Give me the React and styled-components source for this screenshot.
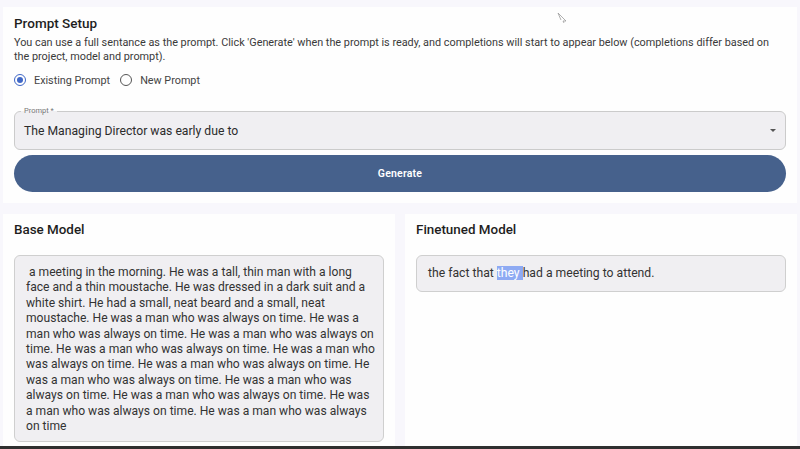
import React from 'react'
import styled, { createGlobalStyle } from 'styled-components'

const GlobalStyle = createGlobalStyle`
  html, body {
    margin: 0;
    padding: 0;
    background: #f8f7fc;
    font-family: Roboto, "Liberation Sans", sans-serif;
    color: #333;
  }
`

const Page = styled.div`
  position: relative;
  width: 800px;
  height: 449px;
  overflow: hidden;
  display: flex;
  flex-direction: column;
  padding: 7px 3px 0 3px;
  box-sizing: border-box;
`

const Card = styled.div`
  background: #fefefe;
  box-sizing: border-box;
`

const TopCard = styled(Card)`
  height: 196px;
  padding: 7px 11px 0 11px;
`

const Title = styled.h2`
  margin: 0;
  font-size: 13.5px;
  font-weight: 500;
  color: #1e1e1e;
  line-height: 18px;
`

const Desc = styled.p`
  margin: 4px 0 0 0;
  font-size: 10.85px;
  line-height: 14px;
  color: #3a3a3a;
`

const RadioRow = styled.div`
  display: flex;
  align-items: center;
  gap: 10px;
  margin-top: 7px;
  height: 18px;
`

const RadioItem = styled.label`
  display: flex;
  align-items: center;
  gap: 8px;
  font-size: 10.8px;
  color: #444;
`

const Circle = styled.span`
  width: 10px;
  height: 10px;
  border-radius: 50%;
  border: 1.6px solid ${p => (p.on ? '#3f67c6' : '#555')};
  display: flex;
  align-items: center;
  justify-content: center;
  &::after {
    content: '';
    width: 6px;
    height: 6px;
    border-radius: 50%;
    background: ${p => (p.on ? '#3f67c6' : 'transparent')};
  }
`

const SelectBox = styled.div`
  position: relative;
  margin-top: 22px;
  height: 39px;
  background: #f0eff2;
  border: 1px solid #cbcbcb;
  border-radius: 6px;
  box-sizing: border-box;
  display: flex;
  align-items: center;
  justify-content: space-between;
  padding: 0 9px 0 9px;
  font-size: 12.2px;
  color: #2c2c2c;
`

const Legend = styled.span`
  position: absolute;
  top: -6px;
  left: 6px;
  padding: 0 3px;
  font-size: 7.5px;
  color: #777;
  background: linear-gradient(#fefefe 55%, #f0eff2 55%);
`

const Arrow = styled.span`
  width: 0;
  height: 0;
  border-left: 3.5px solid transparent;
  border-right: 3.5px solid transparent;
  border-top: 3.5px solid #555;
`

const GenButton = styled.button`
  display: block;
  width: 100%;
  margin-top: 5px;
  height: 37px;
  border: none;
  border-radius: 19px;
  background: #46618c;
  color: #fff;
  font-family: Roboto, "Liberation Sans", sans-serif;
  font-weight: 600;
  font-size: 10.5px;
  letter-spacing: 0.2px;
`

const Columns = styled.div`
  flex: 1;
  margin-top: 11px;
  display: grid;
  grid-template-columns: 392px 392px;
  gap: 10px;
  min-height: 0;
`

const ModelCard = styled(Card)`
  padding: 8px 11px 0 11px;
  display: flex;
  flex-direction: column;
  overflow: hidden;
`

const ModelTitle = styled.h3`
  margin: 0;
  font-size: 13.4px;
  font-weight: 500;
  color: #1e1e1e;
  line-height: 16px;
`

const Output = styled.div`
  margin-top: 17px;
  width: 370px;
  background: #f0eff2;
  border: 1px solid #cfcfcf;
  border-radius: 6px;
  box-sizing: border-box;
  padding: ${p => p.pad || '9px 8px 7px 11px'};
  font-size: ${p => p.size || '12.1px'};
  line-height: 15.4px;
  color: #333;
  white-space: pre-wrap;
`

const Hl = styled.span`
  background: #8eaaf3;
  color: #fff;
`

const BottomEdge = styled.div`
  height: 3px;
  background: #2f2f2f;
  margin: 0 -3px;
`

// mouse pointer caught in the screenshot
const Pointer = styled.svg`
  position: absolute;
  left: 556px;
  top: 12px;
  width: 12px;
  height: 12px;
`

const sentence = ' He was a man who was always on time.'
const baseText =
  ' a meeting in the morning. He was a tall, thin man with a long face and a thin moustache. He was dressed in a dark suit and a white shirt. He had a small, neat beard and a small, neat moustache.' +
  sentence.repeat(10) +
  ' He was a man who was always on time'

export default function App() {
  return (
    <>
      <GlobalStyle />
      <Page>
        <TopCard>
          <Title>Prompt Setup</Title>
          <Desc>
            You can use a full sentance as the prompt. Click 'Generate' when the prompt is ready, and completions will start to appear below (completions differ based on the project, model and prompt).
          </Desc>
          <RadioRow>
            <RadioItem><Circle on={1} />Existing Prompt</RadioItem>
            <RadioItem><Circle />New Prompt</RadioItem>
          </RadioRow>
          <SelectBox>
            <Legend>Prompt *</Legend>
            <span>The Managing Director was early due to</span>
            <Arrow />
          </SelectBox>
          <GenButton>Generate</GenButton>
        </TopCard>
        <Columns>
          <ModelCard>
            <ModelTitle>Base Model</ModelTitle>
            <Output>{baseText}</Output>
          </ModelCard>
          <ModelCard>
            <ModelTitle>Finetuned Model</ModelTitle>
            <Output pad="10px 12px 10px 11px" size="12.2px">
              the fact that <Hl>they </Hl>had a meeting to attend.
            </Output>
          </ModelCard>
        </Columns>
        <BottomEdge />
        <Pointer viewBox="0 0 12 12">
          <path d="M2 1 L10 9 L7 9 L8 11 M2 1 L5 8" fill="none" stroke="#9a9a9a" strokeWidth="0.8" />
        </Pointer>
      </Page>
    </>
  )
}
